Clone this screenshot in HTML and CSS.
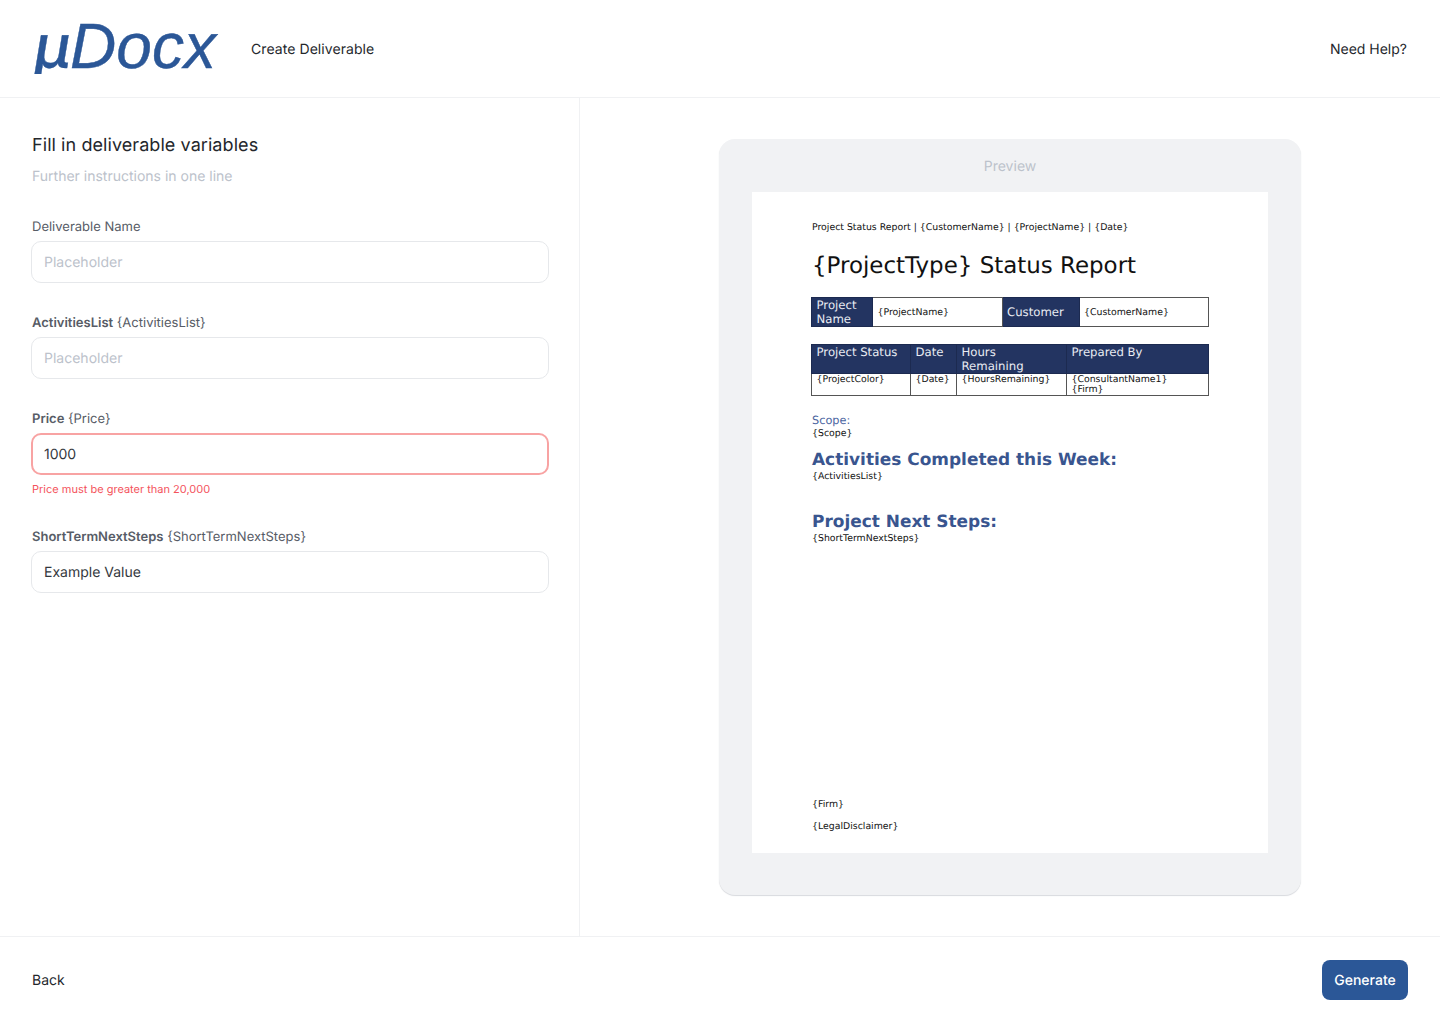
FILE: index.html
```html
<!DOCTYPE html>
<html lang="en">

<head>
    <meta charset="utf-8">
    <title>Create Deliverable</title>
    <link rel="stylesheet" href="styles.css">
</head>

<body>
    <header class="topbar">
        <div class="logo"><span class="mu">μ</span>Docx</div>
        <div class="page-name">Create Deliverable</div>
        <div class="help">Need Help?</div>
    </header>

    <main class="main">
        <section class="form-panel">
            <h1 class="form-title">Fill in deliverable variables</h1>
            <p class="form-sub">Further instructions in one line</p>

            <div class="field">
                <label class="label">Deliverable Name</label>
                <input class="input" type="text" placeholder="Placeholder">
            </div>
            <div class="field">
                <label class="label"><b>ActivitiesList</b> {ActivitiesList}</label>
                <input class="input" type="text" placeholder="Placeholder">
            </div>
            <div class="field">
                <label class="label"><b>Price</b> {Price}</label>
                <input class="input input-error" type="text" value="1000">
                <div class="error-msg">Price must be greater than 20,000</div>
            </div>
            <div class="field">
                <label class="label"><b>ShortTermNextSteps</b> {ShortTermNextSteps}</label>
                <input class="input" type="text" value="Example Value">
            </div>
        </section>

        <section class="preview-panel">
            <div class="preview-card">
                <div class="preview-title">Preview</div>
                <div class="doc">
                    <div class="doc-top">Project Status Report | {CustomerName} | {ProjectName} | {Date}</div>
                    <div class="doc-title">{ProjectType} Status Report</div>

                    <table class="doc-table table-one">
                        <tr>
                            <th class="c1">Project Name</th>
                            <td class="c2">{ProjectName}</td>
                            <th class="c3">Customer</th>
                            <td class="c4">{CustomerName}</td>
                        </tr>
                    </table>

                    <table class="doc-table table-two">
                        <tr>
                            <th class="s1">Project Status</th>
                            <th class="s2">Date</th>
                            <th class="s3">Hours Remaining</th>
                            <th class="s4">Prepared By</th>
                        </tr>
                        <tr>
                            <td>{ProjectColor}</td>
                            <td>{Date}</td>
                            <td>{HoursRemaining}</td>
                            <td>{ConsultantName1}<br>{Firm}</td>
                        </tr>
                    </table>

                    <div class="doc-scope">Scope:</div>
                    <div class="doc-var">{Scope}</div>
                    <div class="doc-h activities">Activities Completed this Week:</div>
                    <div class="doc-var">{ActivitiesList}</div>
                    <div class="doc-h next">Project Next Steps:</div>
                    <div class="doc-var">{ShortTermNextSteps}</div>

                    <div class="doc-foot">
                        <div class="doc-var">{Firm}</div>
                        <div class="doc-var">{LegalDisclaimer}</div>
                    </div>
                </div>
            </div>
        </section>
    </main>

    <footer class="bottombar">
        <div class="back">Back</div>
        <button class="generate" type="button">Generate</button>
    </footer>
</body>

</html>
```

FILE: styles.css
```css
*{
    box-sizing: border-box;
}

body{
    margin: 0;
    height: 1024px;
    display: flex;
    flex-direction: column;
    background-color: white;
    font-family: Inter, "Noto Sans", sans-serif;
    color: #24272c;
    text-rendering: geometricPrecision;
    overflow: hidden;
}

.topbar{
    height: 98px;
    display: flex;
    align-items: center;
    padding: 0 32px;
    border-bottom: 1px solid #f0f1f3;
}

.logo{
    width: 219px;
    padding: 0 0 4px 2px;
    font-family: "Liberation Sans", Arial, sans-serif;
    font-style: italic;
    font-size: 64px;
    line-height: 64px;
    color: #2b5797;
    -webkit-text-stroke: 0.4px #2b5797;
    white-space: nowrap;
}

.mu{
    display: inline-block;
    font-family: Inter, sans-serif;
    font-size: 60px;
    font-weight: 500;
    clip-path: inset(0 -10px 5px -10px);
}

.page-name,
.help{
    padding-top: 2px;
    font-size: 14px;
    font-weight: 430;
}

.page-name{
    letter-spacing: 0.07px;
}

.help{
    margin-left: auto;
    margin-right: 1px;
}

.main{
    flex: 1;
    display: flex;
}

.form-panel{
    width: 580px;
    padding: 37px 31px 0 32px;
    border-right: 1px solid #f0f1f3;
}

.form-title{
    margin: 0;
    font-size: 18px;
    line-height: 22px;
    font-weight: 430;
    letter-spacing: 0.07px;
}

.form-sub{
    margin: 10px 0 29px 0;
    font-size: 14px;
    line-height: 20px;
    color: #bcc2cb;
}

.field{
    margin-bottom: 29px;
}

.label{
    display: block;
    padding-top: 1px;
    margin-bottom: 4px;
    font-size: 13px;
    line-height: 20px;
    color: #575c66;
}

.label b{
    font-weight: 600;
}

.input{
    display: block;
    width: 518px;
    height: 42px;
    margin-left: -1px;
    padding: 0 12px;
    border: 1px solid #e6e8eb;
    border-radius: 10px;
    font-family: inherit;
    font-size: 14px;
    color: #33373d;
    text-rendering: inherit;
    outline: none;
}

.input::placeholder{
    color: #bcc2cb;
    opacity: 1;
}

.input-error{
    border: 2px solid #f8a3a3;
    padding: 0 11px;
}

.error-msg{
    margin-top: 6px;
    font-size: 11px;
    line-height: 16px;
    color: #f4535c;
}

.preview-panel{
    flex: 1;
    padding: 41px 139px 0 139px;
}

.preview-card{
    height: 756px;
    padding: 0 33px;
    background-color: #f1f2f4;
    border-radius: 16px;
    box-shadow: 0 1px 1px #d8dade;
}

.preview-title{
    height: 53px;
    padding-top: 19px;
    text-align: center;
    font-size: 14px;
    line-height: 18px;
    color: #bcc2cb;
}

.doc{
    height: 661px;
    padding: 29px 59px 0 60px;
    background-color: white;
    font-family: "DejaVu Sans", sans-serif;
    color: #111;
}

.doc-top{
    font-size: 9.35px;
    line-height: 13px;
    white-space: nowrap;
}

.doc-title{
    margin: 15px 0 14px 0;
    font-size: 22.95px;
    line-height: 34px;
    white-space: nowrap;
}

.doc-table{
    width: 398px;
    margin-left: -1px;
    border-collapse: collapse;
    table-layout: fixed;
    border: 1px solid #444;
}

.doc-table th{
    background-color: #233461;
    color: #e9ecf3;
    font-size: 11.7px;
    font-weight: normal;
    line-height: 13.5px;
    text-align: left;
    vertical-align: top;
    padding: 1px 4.5px 0 4.5px;
    border: 1px solid #1c2a50;
}

.doc-table td{
    font-size: 9.35px;
    line-height: 10px;
    vertical-align: top;
    padding: 1px 4.5px 0 4.5px;
    border: 1px solid #555;
    white-space: nowrap;
}

.table-one{
    height: 30px;
}

.table-one td{
    vertical-align: middle;
    padding: 2px 4.5px 0 4.5px;
}

.table-one th{
    vertical-align: middle;
}

.c1{ width: 61px; }
.c2{ width: 129.5px; }
.c3{ width: 77px; }

.table-two{
    margin-top: 17px;
}

.table-two th{
    height: 28px;
}

.s1{ width: 99px; }
.s2{ width: 46px; }
.s3{ width: 110px; }

.doc-scope{
    margin-top: 18px;
    font-size: 11.3px;
    line-height: 14px;
    color: #4a64a0;
}

.doc-var{
    font-size: 9.35px;
    line-height: 12px;
}

.doc-h{
    font-size: 16.95px;
    line-height: 23px;
    font-weight: bold;
    color: #39558f;
    white-space: nowrap;
}

.activities{
    margin-top: 8px;
}

.next{
    margin-top: 27px;
}

.doc-foot{
    display: flex;
    flex-direction: column;
    gap: 10px;
    margin-top: 254px;
}

.bottombar{
    height: 88px;
    display: flex;
    align-items: center;
    justify-content: space-between;
    padding: 0 32px 1px 32px;
    border-top: 1px solid #f0f1f3;
}

.back{
    font-size: 14px;
    font-weight: 430;
}

.generate{
    width: 86px;
    height: 40px;
    background-color: #2b5797;
    color: white;
    border: none;
    border-radius: 8px;
    font-family: inherit;
    font-size: 14px;
    font-weight: 500;
    text-rendering: inherit;
}
```
